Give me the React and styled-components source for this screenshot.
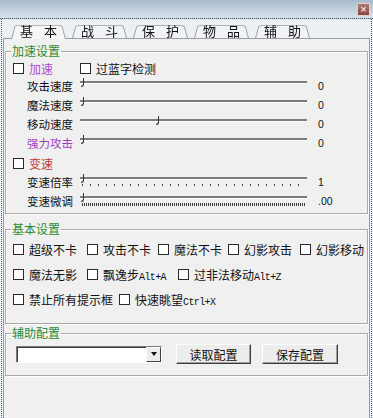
import React from 'react'
import styled, { createGlobalStyle } from 'styled-components'

const GlobalStyle = createGlobalStyle`
  html, body { margin: 0; padding: 0; }
  body {
    background: #edf0f3;
    font-family: "Noto Sans CJK SC", "Liberation Sans", sans-serif;
    font-size: 12px;
    color: #111;
  }
  * { box-sizing: border-box; }
`

const Window = styled.div`
  width: 373px;
  height: 418px;
  overflow: hidden;
  display: flex;
  flex-direction: column;
  background: #edf0f3;
`

const TitleBar = styled.div`
  height: 19px;
  flex: none;
  display: flex;
  justify-content: flex-end;
  padding: 3px 3px 0 0;
  background: linear-gradient(#a6bacd, #dbe3eb);
  border-bottom: 1px dotted #4f5a66;
`

const Close = styled.span`
  width: 13px;
  height: 13px;
  display: flex;
  align-items: center;
  justify-content: center;
  background: linear-gradient(#b27a72, #874640);
  border: 1px solid #e0cbc7;
  color: #fff;
  font-family: "Liberation Sans", sans-serif;
  font-size: 11px;
  line-height: 1;
`

const Body = styled.div`
  flex: 1;
  display: flex;
  flex-direction: column;
  margin: 0 1px;
  padding: 0 1px;
  border-left: 1px dotted #4f5a66;
  border-right: 1px dotted #4f5a66;
`

const TabStrip = styled.div`
  height: 19px;
  flex: none;
  display: flex;
  align-items: flex-end;
  padding-left: 5px;
`

const Tab = styled.div`
  position: relative;
  z-index: ${p => (p.$active ? 3 : 1)};
  width: 61px;
  height: ${p => (p.$active ? 17 : 15)}px;
  margin-bottom: ${p => (p.$active ? -1 : 0)}px;
  display: flex;
  align-items: center;
  justify-content: center;
  font-size: 13px;
  line-height: 15px;
  letter-spacing: 4px;
  padding-left: 4px;
  white-space: pre;
  &::before {
    content: '';
    position: absolute;
    inset: 0 3px;
    z-index: -1;
    background: ${p => (p.$active ? '#f6f6f6' : '#f1f3f5')};
    border: 1px solid #979da4;
    border-bottom: none;
    border-radius: 3px 3px 0 0;
    transform: perspective(24px) rotateX(14deg);
    transform-origin: bottom;
  }
`

const Panel = styled.div`
  flex: 1;
  position: relative;
  z-index: 2;
  background: #f0f0f0;
  border: 1px solid #989ea5;
  border-bottom: none;
  padding: 0 1px;
`

const Group = styled.fieldset`
  margin: ${p => p.$mt}px 0 0;
  padding: 0 0 ${p => p.$pb}px;
  border: 1px solid #a9a9a9;
  box-shadow: inset 1px 1px 0 #fff, 1px 1px 0 #fff;
  min-width: 0;
`

const Legend = styled.legend`
  margin-left: 5px;
  padding: 0 1px;
  color: #2e8b2e;
  font-size: 12px;
  line-height: 14px;
`

const Content = styled.div`
  padding-left: ${p => p.$pl}px;
  padding-top: ${p => p.$pt || 0}px;
`

const CheckRow = styled.div`
  display: flex;
  align-items: center;
  height: ${p => p.$h}px;
`

const Check = styled.div`
  display: flex;
  align-items: center;
  gap: 5px;
  flex: none;
  width: ${p => (p.$w ? `${p.$w}px` : 'auto')};
  color: ${p => p.$color || '#111'};
  white-space: nowrap;
`

const Box = styled.span`
  width: 11px;
  height: 11px;
  flex: none;
  border: 1px solid #2a2a2a;
  background: #fff;
`

const Key = styled.span`
  font-family: "Liberation Mono", monospace;
  font-size: 10px;
  letter-spacing: -0.6px;
`

const SliderRow = styled.div`
  display: flex;
  align-items: flex-start;
  height: 19px;
  padding-left: 14px;
`

const SliderLabel = styled.span`
  width: 53px;
  flex: none;
  line-height: 19px;
  font-size: 11.5px;
  color: ${p => p.$color || '#111'};
`

const Rail = styled.div`
  position: relative;
  width: 227px;
  flex: none;
  padding-top: 4px;
`

const Track = styled.div`
  height: 3px;
  background: #7c7c7c;
  border-bottom: 1px solid #fdfdfd;
`

const Ticks = styled.div`
  margin: 4px 2px 0;
  height: ${p => (p.$step > 3 ? 2 : 3)}px;
  background: repeating-linear-gradient(
    90deg,
    #3e3e3e 0 1px,
    transparent 1px ${p => p.$step}px
  );
`

const Thumb = styled.span`
  position: absolute;
  top: 1px;
  left: ${p => p.$pos}px;
  width: 3px;
  height: 9px;
  border-right: 1px solid #333;
  border-bottom: 1px solid #333;
  border-bottom-right-radius: 3px;
`

const Value = styled.span`
  margin-left: 11px;
  font-family: "Liberation Sans", sans-serif;
  font-size: 10.5px;
  line-height: 19px;
`

const ConfigRow = styled.div`
  display: flex;
  align-items: center;
  height: 22px;
  padding-left: 5px;
`

const Combo = styled.div`
  width: 146px;
  height: 17px;
  display: flex;
  justify-content: flex-end;
  background: #fff;
  border: 1px solid;
  border-color: #7a7a7a #fff #fff #7a7a7a;
  box-shadow: inset 1px 1px 0 #3c3c3c;
  margin-right: 14px;
`

const ComboBtn = styled.span`
  width: 15px;
  display: flex;
  align-items: center;
  justify-content: center;
  background: #ececec;
  border: 1px solid;
  border-color: #fff #404040 #404040 #fff;
  &::after {
    content: '';
    border-left: 3px solid transparent;
    border-right: 3px solid transparent;
    border-top: 4px solid #111;
  }
`

const Button = styled.button`
  width: ${p => p.$w}px;
  height: 20px;
  margin-right: ${p => p.$mr || 0}px;
  padding: 0;
  background: #ececec;
  border: 1px solid;
  border-color: #fff #3c3c3c #3c3c3c #fff;
  box-shadow: inset -1px -1px 0 #a0a0a0;
  font-family: inherit;
  font-size: 12px;
  color: #111;
`

const Slider = ({ label, color, value, pos = 1, step }) => (
  <SliderRow>
    <SliderLabel $color={color}>{label}</SliderLabel>
    <Rail>
      <Track />
      {step && <Ticks $step={step} />}
      <Thumb $pos={pos} />
    </Rail>
    <Value>{value}</Value>
  </SliderRow>
)

const tabs = ['基 本', '战 斗', '保 护', '物 品', '辅 助']

export default function App() {
  return (
    <Window>
      <GlobalStyle />
      <TitleBar>
        <Close>×</Close>
      </TitleBar>
      <Body>
        <TabStrip>
          {tabs.map((t, i) => (
            <Tab key={t} $active={i === 0}>{t}</Tab>
          ))}
        </TabStrip>
        <Panel>
          <Group $mt={5} $pb={2}>
            <Legend>加速设置</Legend>
            <Content $pl={7} $pt={1}>
              <CheckRow $h={18}>
                <Check $w={67} $color="#b04ccc"><Box />加速</Check>
                <Check><Box />过蓝字检测</Check>
              </CheckRow>
              <Slider label="攻击速度" value="0" />
              <Slider label="魔法速度" value="0" />
              <Slider label="移动速度" value="0" pos={76} />
              <Slider label="强力攻击" value="0" color="#9a3fc0" />
              <CheckRow $h={20}>
                <Check $color="#c0392b"><Box />变速</Check>
              </CheckRow>
              <Slider label="变速倍率" value="1" step={8} />
              <Slider label="变速微调" value=".00" step={2} />
            </Content>
          </Group>

          <Group $mt={8} $pb={11}>
            <Legend>基本设置</Legend>
            <Content $pl={7} $pt={1}>
              <CheckRow $h={25}>
                <Check $w={74}><Box />超级不卡</Check>
                <Check $w={71}><Box />攻击不卡</Check>
                <Check $w={70}><Box />魔法不卡</Check>
                <Check $w={72}><Box />幻影攻击</Check>
                <Check><Box />幻影移动</Check>
              </CheckRow>
              <CheckRow $h={25}>
                <Check $w={74}><Box />魔法无影</Check>
                <Check $w={91}><Box /><span>飘逸步<Key>Alt+A</Key></span></Check>
                <Check><Box /><span>过非法移动<Key>Alt+Z</Key></span></Check>
              </CheckRow>
              <CheckRow $h={25}>
                <Check $w={106}><Box />禁止所有提示框</Check>
                <Check><Box /><span>快速眺望<Key>Ctrl+X</Key></span></Check>
              </CheckRow>
            </Content>
          </Group>

          <Group $mt={2} $pb={10}>
            <Legend>辅助配置</Legend>
            <Content $pl={5} $pt={3}>
              <ConfigRow>
                <Combo><ComboBtn /></Combo>
                <Button $w={75} $mr={11}>读取配置</Button>
                <Button $w={76}>保存配置</Button>
              </ConfigRow>
            </Content>
          </Group>
        </Panel>
      </Body>
    </Window>
  )
}
